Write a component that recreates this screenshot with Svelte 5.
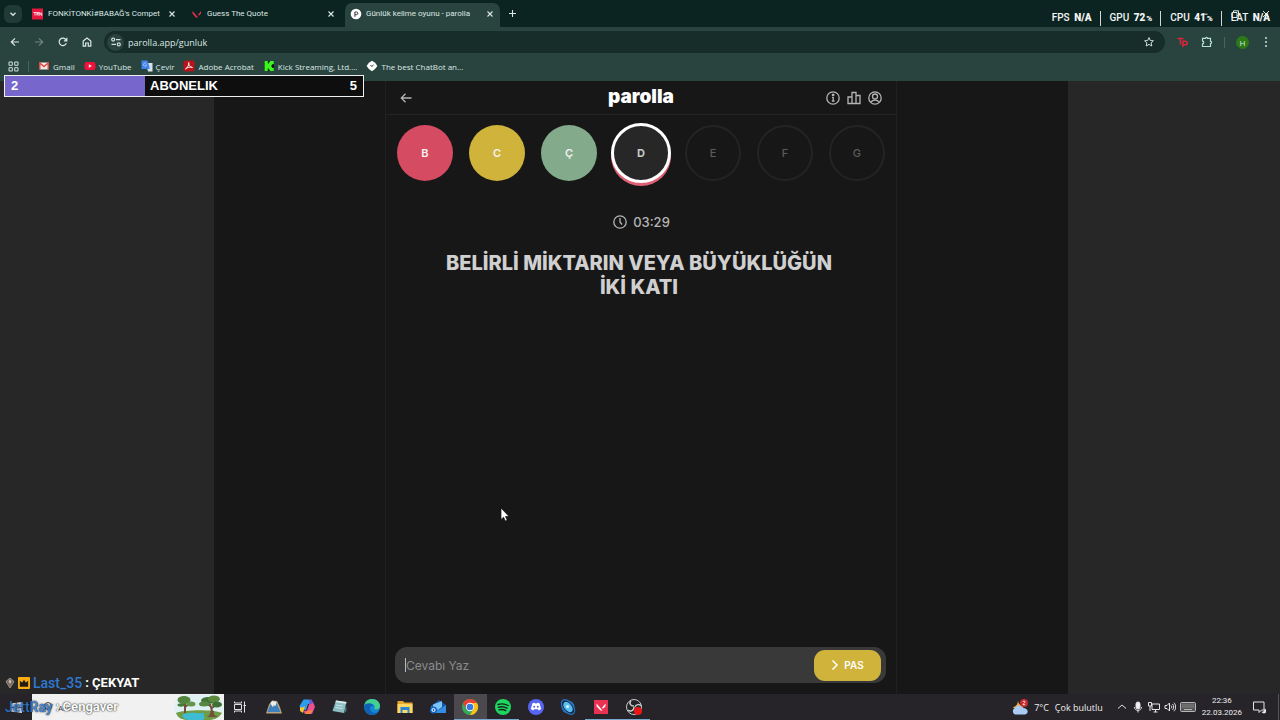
<!-- App.svelte -->

<script>
  let answer = '';
  let current = 3;

  const tabs = [
    { title: 'FONKİTONKİ#BABAĞ\'s Compet', icon: 'trn' },
    { title: 'Guess The Quote', icon: 'valorant' },
    { title: 'Günlük kelime oyunu - parolla', icon: 'parolla', active: true }
  ];

  const bookmarks = [
    { label: 'Gmail', icon: 'gmail' },
    { label: 'YouTube', icon: 'youtube' },
    { label: 'Çevir', icon: 'translate' },
    { label: 'Adobe Acrobat', icon: 'acrobat' },
    { label: 'Kick Streaming, Ltd....', icon: 'kick' },
    { label: 'The best ChatBot an...', icon: 'chatbot' }
  ];

  const letters = [
    { char: 'B', state: 'wrong' },
    { char: 'C', state: 'passed' },
    { char: 'Ç', state: 'correct' },
    { char: 'D', state: 'idle' },
    { char: 'E', state: 'idle' },
    { char: 'F', state: 'idle' },
    { char: 'G', state: 'idle' }
  ];

  const stats = [
    { name: 'FPS', value: 'N/A', unit: '' },
    { name: 'GPU', value: '72', unit: '%' },
    { name: 'CPU', value: '41', unit: '%' },
    { name: 'LAT', value: 'N/A', unit: '' }
  ];

  const apps = [
    { name: 'Photos' },
    { name: 'Copilot' },
    { name: 'Notepad' },
    { name: 'Edge' },
    { name: 'Explorer' },
    { name: 'Mail' },
    { name: 'Chrome', running: true, focused: true },
    { name: 'Spotify', running: true },
    { name: 'Discord' },
    { name: 'Planet' },
    { name: 'Valorant', running: true },
    { name: 'OBS', running: true }
  ];

  function pass() {
    answer = '';
    current = (current + 1) % letters.length;
  }
</script>

<div class="screen">
  <header class="browser">
    <div class="tab-strip">
      <button class="tab-search" aria-label="Search tabs">
        <svg width="10" height="10" viewBox="0 0 10 10"><path d="M2.5 3.8 5 6.3l2.5-2.5" fill="none" stroke="#dce8e4" stroke-width="1.3" /></svg>
      </button>
      <div class="tabs">
        {#each tabs as tab (tab.title)}
          <div class="tab" class:active={tab.active}>
            {#if tab.icon === 'trn'}
              <svg width="12" height="12" viewBox="0 0 12 12">
                <rect y="0.5" width="11" height="11" fill="#e5173f" />
                <path d="M1.5 4.5h3M3 4.5v3M5 7.5v-3h1.5v1.2H5.2L6.6 7.5M7.7 7.5v-3l2 3v-3" fill="none" stroke="#fff" stroke-width="0.8" />
              </svg>
            {:else if tab.icon === 'valorant'}
              <svg width="12" height="12" viewBox="0 0 12 12"><path d="M1.5 3v2.4L4.8 9.5h2.3zM10 3v2.4L8.600 7.200H6.800z" fill="#e8304c" /></svg>
            {:else}
              <svg width="12" height="12" viewBox="0 0 12 12">
                <circle cx="6" cy="6" r="5.300" fill="#fff" />
                <path d="M4.900 8.800V4h1.600a1.300 1.300 0 0 1 0 2.700H5" fill="none" stroke="#333" stroke-width="1" />
              </svg>
            {/if}
            <span class="tab-title">{tab.title}</span>
            <button class="close" aria-label="Close tab">
              <svg width="8" height="8" viewBox="0 0 8 8"><path d="m1.5 1.5 5 5m0-5-5 5" stroke="#dce8e4" stroke-width="1.1" /></svg>
            </button>
          </div>
        {/each}
      </div>
      <button class="new-tab" aria-label="New tab">
        <svg width="9" height="9" viewBox="0 0 9 9"><path d="M4.5 1v7M1 4.5h7" stroke="#dce8e4" stroke-width="1.1" /></svg>
      </button>
      <div class="window-controls">
        <button aria-label="Minimize"><svg width="10" height="10" viewBox="0 0 10 10"><path d="M2 5.2h6.5" stroke="#dce8e4" /></svg></button>
        <button aria-label="Restore"><svg width="10" height="10" viewBox="0 0 10 10"><path d="M2 3.5h5V8.5H2zM3.5 3.5V1.8h5v5H7" fill="none" stroke="#dce8e4" /></svg></button>
        <button aria-label="Close"><svg width="10" height="10" viewBox="0 0 10 10"><path d="m2 2 6 6m0-6L2 8" stroke="#dce8e4" /></svg></button>
      </div>
    </div>

    <div class="toolbar">
      <div class="nav">
        <button aria-label="Back"><svg width="12" height="12" viewBox="0 0 12 12"><path d="M10 6H2.5M6 2.3 2.300 6 6 9.700" /></svg></button>
        <button class="dim" aria-label="Forward"><svg width="12" height="12" viewBox="0 0 12 12"><path d="M2 6h7.5M6 2.300 9.700 6 6 9.700" /></svg></button>
        <button aria-label="Reload"><svg width="12" height="12" viewBox="0 0 12 12"><path d="M9.300 7.200A3.700 3.700 0 1 1 8.900 3.700L9.700 4.600M9.800 1.800v3H6.900" /></svg></button>
        <button aria-label="Home"><svg width="12" height="12" viewBox="0 0 12 12"><path d="M2.200 5 6 2l3.800 3v5.200H7.300V7H4.700v3.200H2.200z" /></svg></button>
      </div>
      <div class="omnibox">
        <span class="site-info">
          <svg width="12" height="12" viewBox="0 0 12 12" fill="none" stroke="#cfe0da" stroke-width="1.2"><circle cx="3.2" cy="3.6" r="1.5" /><path d="M6 3.6h4.5M1.5 8.400H6" /><circle cx="8.800" cy="8.400" r="1.500" /></svg>
        </span>
        <input type="text" value="parolla.app/gunluk" aria-label="Address" />
        <button aria-label="Bookmark this page">
          <svg width="12" height="12" viewBox="0 0 12 12"><path d="m6 1.600 1.300 2.900 3.100.3-2.300 2.100.7 3.100L6 8.400 3.200 10l.7-3.100L1.600 4.800l3.100-.3z" fill="none" stroke="#cfe0da" stroke-linejoin="round" /></svg>
        </button>
      </div>
      <div class="extensions">
        <button aria-label="Tp extension"><svg width="14" height="12" viewBox="0 0 14 12"><path d="M1.500 2.500h6M4.500 2.500v6M7 11V5.200h2.500a1.700 1.700 0 0 1 0 3.500H7.300" fill="none" stroke="#d9263e" stroke-width="1.600" /></svg></button>
        <button aria-label="Extensions"><svg width="12" height="12" viewBox="0 0 12 12"><path d="M1.500 2.300h3a1 1 0 0 1 2 0h3v3a1 1 0 0 1 0 2.200v3h-8v-2.700a1.300 1.300 0 0 0 0-2.600z" fill="none" stroke="#b5e1d1" stroke-width="1.200" /></svg></button>
        <span class="divider"></span>
        <button class="avatar" aria-label="Profile">H</button>
        <button class="menu" aria-label="Menu"><svg width="4" height="12" viewBox="0 0 4 12" fill="#cfe0da"><circle cx="2" cy="2" r="1" /><circle cx="2" cy="6" r="1" /><circle cx="2" cy="10" r="1" /></svg></button>
      </div>
    </div>

    <nav class="bookmarks">
      <svg class="grid-icon" width="11" height="11" viewBox="0 0 11 11" fill="none" stroke="#cfe0da"><path d="M1 1h3.300v3.300H1zM6.700 1H10v3.300H6.700zM1 6.700h3.300V10H1zM6.700 6.700H10V10H6.700z" /></svg>
      <span class="divider"></span>
      {#each bookmarks as mark (mark.label)}
        <a href="#{mark.icon}">
          <svg width="12" height="12" viewBox="0 0 12 12">
            {#if mark.icon === 'gmail'}
              <path d="M1.500 2.500h9v7h-9z" fill="#f4e9e8" /><path d="M1.800 9.500V3L6 6.500 10.200 3v6.500" fill="none" stroke="#e2463c" stroke-width="1.400" />
            {:else if mark.icon === 'youtube'}
              <rect x="0.500" y="2" width="11" height="8" rx="2.300" fill="#f0123a" /><path d="M4.800 4.200v3.600L7.900 6z" fill="#fff" />
            {:else if mark.icon === 'translate'}
              <path d="M5 3h6.500v8.500H7z" fill="#dbe3ea" /><path d="M.5.5h6L9 9H.5z" fill="#4284ec" /><path d="M5.300 3.600A1.600 1.600 0 1 0 5.600 5H4.200M8.500 5.500h2M9.500 5v2l-1 1.500" fill="none" stroke="#b9d6ff" stroke-width=".7" />
            {:else if mark.icon === 'acrobat'}
              <rect x="0.500" y="0.500" width="11" height="11" rx="2" fill="#b9141b" /><path d="M2.500 9c2-1 4-5 3.300-6.500C5 3 6 7 9.500 7.500 7.500 6.500 4 7.500 2.500 9z" fill="none" stroke="#fff" stroke-width=".9" />
            {:else if mark.icon === 'kick'}
              <rect x="1" y="1" width="10" height="10" fill="#0b130b" /><path d="M1.500 1h3.300v2.500h1V2.300h1V1h4v3.300H9v1.200H8v1h1v1.200h1.800V11h-4V9.700h-1V8.500h-1V11H1.500z" fill="#3df522" />
            {:else}
              <path d="m6 .8 3.100 2L11.400 6 9 9.100 6 11.300 2.900 9.100.6 6 2.900 2.800z" fill="#fff" /><path d="m4.500 5 1.200 1.500L7.500 5" fill="none" stroke="#29433e" />
            {/if}
          </svg>
          {mark.label}
        </a>
      {/each}
    </nav>
  </header>

  <main class="page">
    <div class="backdrop">
      <section class="game">
        <div class="game-header">
          <button class="back" aria-label="Geri">
            <svg width="14" height="14" viewBox="0 0 14 14"><path d="M12.500 7h-10M6.500 2.800 2.300 7l4.200 4.200" /></svg>
          </button>
          <h1>parolla</h1>
          <div class="game-actions">
            <button aria-label="Bilgi"><svg width="16" height="16" viewBox="0 0 16 16"><circle cx="8" cy="8" r="6.200" /><path d="M7 7.300h1.200v3.500M6.900 11h2.600M7.500 4.500h1.200v.8H7.500z" /></svg></button>
            <button aria-label="İstatistik"><svg width="16" height="16" viewBox="0 0 16 16"><path d="M2 7h4v6.500H2zM6 2.500h4v11H6zM10 5.500h4v8h-4z" /></svg></button>
            <button aria-label="Profil"><svg width="16" height="16" viewBox="0 0 16 16"><circle cx="8" cy="8" r="6.200" /><circle cx="8" cy="6.500" r="2.500" /><path d="M3.900 12.200c1.800-2.700 6.400-2.700 8.200 0" /></svg></button>
          </div>
        </div>

        <ul class="letters">
          {#each letters as letter, i (letter.char)}
            <li class="letter {letter.state}" class:current={i === current}>{letter.char}</li>
          {/each}
        </ul>

        <div class="timer">
          <svg width="16" height="16" viewBox="0 0 16 16"><circle cx="8" cy="8" r="6.200" fill="none" stroke="#b4b4b4" stroke-width="1.300" /><path d="M8 4v4l2 2.500" fill="none" stroke="#b4b4b4" stroke-width="1.300" /></svg>
          <span>03:29</span>
        </div>

        <p class="question">BELİRLİ MİKTARIN VEYA BÜYÜKLÜĞÜN İKİ KATI</p>

        <form class="answer" on:submit|preventDefault={pass}>
          <input type="text" placeholder="Cevabı Yaz" aria-label="Cevabı Yaz" bind:value={answer} />
          <span class="caret"></span>
          <button type="submit">
            <svg width="8" height="12" viewBox="0 0 8 12"><path d="m1.500 1.500 4.500 4.500-4.500 4.500" fill="none" stroke="#fff" stroke-width="1.500" /></svg>
            PAS
          </button>
        </form>
      </section>
    </div>
  </main>

  <footer class="taskbar">
    <button class="start" aria-label="Start">
      <svg width="11" height="11" viewBox="0 0 11 11" fill="#e8eef5"><path d="M0 1.500 4.800.8v4.400H0zM5.500.7 11 0v5.200H5.500zM0 5.900h4.800v4.400L0 9.600zM5.500 5.900H11V11l-5.500-.7z" /></svg>
    </button>
    <label class="search">
      <svg width="12" height="12" viewBox="0 0 12 12"><circle cx="7" cy="5" r="3.500" fill="none" stroke="#444" /><path d="M4.500 7.500 1.500 10.500" stroke="#444" /></svg>
      <input type="text" placeholder="Ara" aria-label="Ara" />
      <svg class="trees" width="50" height="26" viewBox="0 0 50 26">
        <rect y="1" width="49" height="25" rx="12" fill="#dff1f2" />
        <path d="M2 19c8-3 35-4 46 0-4 6-9 7-14 7H14C8 26 4 24 2 19z" fill="#6f9c45" />
        <path d="M8 21c9-4 17-1 23-2-3 3 2 4-2 7H14c-3-1-5-2-6-5z" fill="#3dbcd2" />
        <path d="M11 19V9M11 13l4-3M38 22c1-5-1-8-2-12M38 14l5-4M36 12l-5-4" stroke="#73503b" stroke-width="2" fill="none" />
        <path d="M33 23c3-1 3-4 4-7l3 1c-1 3 1 5 4 6z" fill="#73503b" />
        <ellipse cx="10" cy="6" rx="6.500" ry="4" fill="#52853e" /><ellipse cx="17" cy="10" rx="4.500" ry="2.500" fill="#64964a" />
        <ellipse cx="7" cy="11" rx="3.500" ry="1.700" fill="#477a38" />
        <ellipse cx="34" cy="6.500" rx="7" ry="3.500" fill="#437437" /><ellipse cx="40" cy="5" rx="6" ry="3.500" fill="#5c8a3f" />
        <ellipse cx="30" cy="10" rx="5" ry="2.500" fill="#568743" /><ellipse cx="43" cy="10.500" rx="5" ry="3" fill="#3f6f36" />
      </svg>
    </label>
    <button class="task-view" aria-label="Task view">
      <svg width="14" height="14" viewBox="0 0 14 14" fill="none" stroke="#e1e1e3"><path d="M1.500 4.500h7v5h-7zM1.500 1.500v1.500h7V1.500M1.500 12.500V11h7v1.500M11.500 1.500v11M10.500 5.500h2.500" /></svg>
    </button>

    <div class="apps">
      {#each apps as app (app.name)}
        <button class="app" class:running={app.running} class:focused={app.focused} aria-label={app.name}>
          <svg width="18" height="18" viewBox="0 0 18 18">
            {#if app.name === 'Photos'}
              <path d="M1 15.500 4 6.500l3-4 5 .5 2.500 5 2.500 7.500z" fill="#b8a47e" /><path d="m2.500 14 3-8 3 3 3-4 4 9z" fill="#3e80bd" /><path d="m5.500 5 2 4 1-2 2 1 1-4-4-1z" fill="#e8f2f2" />
            {:else if app.name === 'Copilot'}
              <path d="M5.500 1.500H11l2 4-3 .5-2 6H3L1.500 8z" fill="#2f9bed" /><path d="M2 9c2 1 4 0 5-1l-2 7-3-2z" fill="#f3c82e" /><path d="M13 5h2.500l1.500 4-3 7H7l-2-3 4-.5 2-6z" fill="#ed5090" /><path d="m11 1.500 2 4.500 2.500-1-2-3.500z" fill="#7a52d9" /><path d="m9 13-2 3h5l3-4z" fill="#f58a3c" />
            {:else if app.name === 'Notepad'}
              <path d="M5 2.500 15.500 4 13 15 1.500 13z" fill="#8bbdc3" /><path d="M5 2.500 15.500 4l-.5 1.800L4.500 4.300z" fill="#dce8e8" /><path d="m13 15 2.500-2-.5-7z" fill="#4b777f" /><path d="m5 7 7 1M4.500 9.500l7 1" stroke="#c7e4e6" />
            {:else if app.name === 'Edge'}
              <circle cx="9" cy="9" r="8" fill="#1686d3" /><path d="M1.200 8C2 3 5 1 9 1c5 0 8 3.500 8 7 0 3-3 4-6 3 2-3 0-5-3-5-3 0-5 0-6.800 2z" fill="#43cf91" /><path d="M1.200 7.500C3 5 9 4 10 7.500 7 8 6 10 7.500 12.500c2 3 5 3 8 1C12 19 1 18 1.200 7.500z" fill="#0e61b4" />
            {:else if app.name === 'Explorer'}
              <path d="M1.500 3h5.500l1.500 1.500h8V15h-15z" fill="#e5a92d" /><path d="M1.500 6h15v9h-15z" fill="#ffd863" /><path d="M4.500 9h9v6h-2v-3h-5v3h-2z" fill="#2c86d4" />
            {:else if app.name === 'Mail'}
              <path d="M2 8 10 2l7 5v8H2z" fill="#1259ad" /><path d="M4 6.500 13 3v6l-4 3-5-2z" fill="#7cc3f2" /><path d="m2 8 8 4 7-5v8H2z" fill="#348de5" /><circle cx="4.500" cy="12" r="3.500" fill="#1766c3" /><circle cx="4.500" cy="12" r="1.500" fill="none" stroke="#fff" />
            {:else if app.name === 'Chrome'}
              <circle cx="9" cy="9" r="8" fill="#3aa757" /><path d="M2.100 5A8 8 0 0 1 16 5H9a4 4 0 0 0-3.500 6z" fill="#e54235" /><path d="M9 5h7a8 8 0 0 1-7 12l3.500-6A4 4 0 0 0 9 5z" fill="#fbc116" /><circle cx="9" cy="9" r="4.200" fill="#fff" /><circle cx="9" cy="9" r="3.300" fill="#3878e2" />
            {:else if app.name === 'Spotify'}
              <circle cx="9" cy="9" r="8" fill="#1ed760" /><path d="M4 6.500c3.500-1 7-.7 10.200 1M4.500 9.200c3-.8 5.800-.5 8.500 1M5 11.800c2.500-.7 4.700-.4 6.800.8" fill="none" stroke="#15251b" stroke-width="1.400" stroke-linecap="round" />
            {:else if app.name === 'Discord'}
              <circle cx="9" cy="9" r="8" fill="#5865f2" /><path d="M5.500 5.300 8 4.700l.3.7h1.400l.3-.7 2.500.6 1.700 5.700-2.400 1.500-1-1.200H7.200l-1 1.200L3.800 11z" fill="#fff" /><circle cx="7.200" cy="8.800" r="1" fill="#5865f2" /><circle cx="10.800" cy="8.800" r="1" fill="#5865f2" />
            {:else if app.name === 'Planet'}
              <circle cx="9" cy="9" r="6.500" fill="#2c78cb" /><ellipse cx="9" cy="9" rx="8.500" ry="5" transform="rotate(50 9 9)" fill="#142943" stroke="#2873bd" stroke-width="1.200" /><ellipse cx="9" cy="9" rx="6" ry="3.600" transform="rotate(50 9 9)" fill="#57bdf2" /><circle cx="8.500" cy="8.500" r="1.500" fill="#e1f7ff" />
            {:else if app.name === 'Valorant'}
              <rect x="2" y="2" width="14" height="14" fill="#e93151" /><path d="M4.500 5.500v2.700l4 4.300h2zM13.500 5.500v2.700l-1.800 2h-2z" fill="#fff" />
            {:else}
              <circle cx="9" cy="9" r="7.500" fill="#242326" stroke="#c8c8c8" /><path d="M9 8c-4 0-5-3-3-5M9 9c0 4-4 5-6 3M10 9c1-3 5-3 6-1" fill="none" stroke="#c8c8c8" stroke-width="1.500" /><circle cx="13" cy="13" r="4" fill="#eb1717" />
            {/if}
          </svg>
        </button>
      {/each}
    </div>

    <div class="tray">
      <svg class="weather" width="18" height="18" viewBox="0 0 18 18"><path d="M7 2c0 4 3 6 6 6-1 4-9 5-11 1 3 0 5-3 5-7z" fill="#efad3b" /><path d="M4 16.500a3.500 3.500 0 0 1 0-6.500C5 6.500 11 6.500 12 10c6 0 6 6.500 1.500 6.500z" fill="#a9cbf4" /><circle cx="13" cy="5" r="4" fill="#c92a2e" /><path d="M12 4c0-1.300 2-1.300 2 0 0 1-2 1.500-2 2.700h2.200" fill="none" stroke="#fff" stroke-width=".8" /></svg>
      <span class="forecast"><span>7°C</span><span>Çok bulutlu</span></span>
      <div class="tray-icons">
        <svg width="12" height="12" viewBox="0 0 12 12"><path d="M2 7.500 6 4l4 3.500" /></svg>
        <svg width="12" height="12" viewBox="0 0 12 12"><rect x="4" y="1" width="4" height="7" rx="2" fill="#f2f2f2" /><path d="M2.500 6c0 4.500 7 4.500 7 0M6 9.500v2" /></svg>
        <svg width="12" height="12" viewBox="0 0 12 12"><path d="M4 3h7.500v5.500H4zM7.500 8.500V11M5.500 11h4M.5 1.500h3V5h-3zM2 5v5" /></svg>
        <svg width="12" height="12" viewBox="0 0 12 12"><path d="M1 4.500h2L5.500 2v8L3 7.500H1zM7 4.500c1 1 1 2 0 3M8.500 3c1.600 1.600 1.600 4.400 0 6M10 1.700c2.200 2.500 2.200 6.100 0 8.600" /></svg>
        <svg width="16" height="12" viewBox="0 0 16 12"><rect x=".5" y="1.500" width="15" height="9" rx="1" fill="#555" stroke="#b8b8bc" /><path d="M2.500 4h11M2.500 6h11" stroke="#b8b8bc" stroke-dasharray="1 1" /><path d="M4 8.500h8" stroke="#b8b8bc" /></svg>
      </div>
      <div class="clock"><span>22:36</span><span>22.03.2026</span></div>
      <svg class="notice" width="14" height="14" viewBox="0 0 14 14"><path d="M1.500 2h10.500v8H9.500L7 12.500V10H1.500z" fill="none" stroke="#e4e4e6" /><path d="M12.500 8.500a2.500 2.500 0 1 1-3 3.200c1.500.5 3-.7 3-3.200z" fill="#e4e4e6" /></svg>
      <span class="desktop-edge"></span>
    </div>
  </footer>

  <!-- stream overlays -->
  <div class="stats">
    {#each stats as stat (stat.name)}
      <span class="stat">{stat.name} <b>{stat.value}{#if stat.unit}<small>{stat.unit}</small>{/if}</b></span>
    {/each}
  </div>

  <div class="goal">
    <div class="goal-fill" style="width: {(2 / 5) * 98}%"></div>
    <span>2</span>
    <span>ABONELIK</span>
    <span>5</span>
  </div>

  <div class="chat">
    <p>
      <svg width="10" height="12" viewBox="0 0 10 12"><path d="m5 1 4 3.500L5 11 1 4.500z" fill="#77665d" stroke="#9e9188" /><path d="m5 2.500 1.500 2L5 7 3.500 4.500z" fill="#d1c5b8" /></svg>
      <svg width="12" height="12" viewBox="0 0 13 13"><rect width="13" height="13" rx="1" fill="#f9ad13" /><path d="m2 4 2.500 2L6.500 3l2 3L11 4v6.500H2z" fill="#241d12" /></svg>
      <b class="user">Last_35</b><b>: ÇEKYAT</b>
    </p>
    <p class="fading"><b class="user">JettRay</b><b>: Cengaver</b></p>
  </div>

  <svg class="cursor" width="10" height="15" viewBox="0 0 10 15"><path d="M1 1v11.500l2.600-2.300 1.700 3.900 1.900-.8-1.700-3.800H9z" fill="#fff" stroke="#111" stroke-width=".7" /></svg>
</div>

<style>
  :global(body) {
    margin: 0;
    background: #171717;
  }

  .screen {
    position: relative;
    display: flex;
    flex-direction: column;
    min-height: 100vh;
    overflow: hidden;
    font-family: 'Open Sans', 'Noto Sans', sans-serif;
    font-size: 8px;
    color: #dce8e4;
  }

  button {
    display: flex;
    align-items: center;
    justify-content: center;
    padding: 0;
    border: 0;
    background: none;
    color: inherit;
    font: inherit;
    cursor: pointer;
  }

  input {
    min-width: 0;
    padding: 0;
    border: 0;
    outline: 0;
    background: none;
    color: inherit;
    font: inherit;
  }

  svg {
    display: block;
    flex: none;
  }

  .divider {
    width: 1px;
    height: 11px;
    background: #48645e;
  }

  /* browser chrome */
  .browser {
    background: #29433e;
  }

  .tab-strip {
    display: flex;
    align-items: center;
    height: 27px;
    padding-left: 4px;
    background: #0b2421;
  }

  .tab-search {
    width: 18px;
    height: 18px;
    border-radius: 6px;
    background: #203a36;
  }

  .tabs {
    display: flex;
    align-self: stretch;
    gap: 4px;
    margin-left: 5px;
    font-family: Roboto, sans-serif;
  }

  .tab {
    display: flex;
    align-items: center;
    gap: 4px;
    width: 144px;
    margin-top: 3px;
    padding: 0 6px 3px 5px;
    border-radius: 7px 7px 0 0;
  }

  .tab.active {
    background: #29433e;
  }

  .tab-title {
    flex: 1;
    min-width: 0;
    white-space: nowrap;
  }

  .close {
    width: 8px;
    height: 8px;
    margin-left: 4px;
  }

  .new-tab {
    margin-left: 8px;
  }

  .window-controls {
    display: flex;
    gap: 21px;
    margin-left: auto;
    padding-right: 9px;
  }

  .toolbar {
    display: flex;
    align-items: center;
    gap: 11px;
    height: 30px;
    padding: 0 12px 0 9px;
  }

  .nav {
    display: flex;
    gap: 12px;
  }

  .nav svg {
    fill: none;
    stroke: #dce8e4;
    stroke-width: 1.2;
  }

  .nav .dim {
    opacity: 0.4;
  }

  .omnibox {
    flex: 1;
    display: flex;
    align-items: center;
    gap: 4px;
    height: 22px;
    padding: 0 10px 0 3px;
    border-radius: 11px;
    background: #162d2a;
    font-size: 9px;
  }

  .omnibox input {
    flex: 1;
  }

  .site-info {
    display: grid;
    place-items: center;
    width: 17px;
    height: 17px;
    border-radius: 50%;
    background: #29433e;
  }

  .extensions {
    display: flex;
    align-items: center;
    gap: 11px;
  }

  .avatar {
    width: 13px;
    height: 13px;
    border-radius: 50%;
    background: #2c7a17;
  }

  .menu {
    margin-left: 4px;
  }

  .bookmarks {
    display: flex;
    align-items: center;
    gap: 9px;
    height: 24px;
    padding: 0 8px 6px;
    box-sizing: border-box;
  }

  .bookmarks a {
    display: flex;
    align-items: center;
    gap: 3px;
    color: inherit;
    text-decoration: none;
    white-space: nowrap;
  }

  /* game page */
  .page {
    flex: 1;
    display: flex;
    justify-content: center;
    padding-left: 2px;
    background: #272727;
  }

  .backdrop {
    display: flex;
    justify-content: center;
    width: 66.8%;
    background: #171717;
  }

  .game {
    flex: 1;
    display: flex;
    flex-direction: column;
    max-width: 510px;
    border: solid #202020;
    border-width: 0 1px;
    font-family: Inter, Roboto, sans-serif;
  }

  .game-header {
    display: grid;
    grid-template-columns: 1fr auto 1fr;
    align-items: center;
    height: 33px;
    padding: 0 13px;
    border-bottom: 1px solid #232323;
  }

  .back {
    justify-self: start;
  }

  .game-header svg {
    fill: none;
    stroke: #b4b4b4;
    stroke-width: 1.3;
  }

  h1 {
    margin: 0;
    padding-bottom: 2px;
    color: #fff;
    font-size: 19px;
    font-weight: 900;
    line-height: 20px;
  }

  .game-actions {
    display: flex;
    justify-self: end;
    gap: 5px;
  }

  .letters {
    display: flex;
    align-items: center;
    justify-content: center;
    gap: 16px;
    height: 60px;
    margin: 8px 0 0;
    padding: 0;
    list-style: none;
  }

  .letter {
    display: grid;
    place-items: center;
    box-sizing: border-box;
    width: 56px;
    height: 56px;
    border-radius: 50%;
    color: #f2f2f2;
    font-size: 11px;
    font-weight: 600;
  }

  .letter.wrong {
    background: #d54b61;
  }

  .letter.passed {
    background: #cfb33b;
  }

  .letter.correct {
    background: #83aa8a;
  }

  .letter.idle {
    border: 2px solid #242424;
    color: #5c5c5c;
    font-weight: 500;
  }

  .letter.current {
    width: 60px;
    height: 60px;
    margin: 0 -2px;
    border: 3px solid #fff;
    background: #272727;
    box-shadow: 0 3px 0 #de6074;
    color: #c8c8c8;
    font-weight: 700;
  }

  .timer {
    display: flex;
    align-items: center;
    justify-content: center;
    gap: 5px;
    margin-top: 29px;
    color: #b4b4b4;
    font-size: 13px;
    font-weight: 500;
    line-height: 20px;
  }

  .question {
    margin: 19px 52px 0 48px;
    color: #d0d0d0;
    font-size: 20px;
    font-weight: 800;
    line-height: 24px;
    text-align: center;
  }

  .answer {
    position: relative;
    display: flex;
    align-items: center;
    height: 36px;
    margin: auto 10px 11px 9px;
    padding: 0 5px 0 11px;
    border-radius: 12px;
    background: #393939;
    font-size: 12px;
  }

  .answer input {
    flex: 1;
    color: #ddd;
  }

  .answer input::placeholder {
    color: #8b8b8b;
    opacity: 1;
  }

  .caret {
    position: absolute;
    left: 10px;
    width: 1px;
    height: 14px;
    background: #bbb;
  }

  .answer button {
    gap: 5px;
    width: 67px;
    height: 31px;
    border-radius: 11px;
    background: #cfb33b;
    color: #fff;
    font-size: 10px;
    font-weight: 600;
  }

  /* taskbar */
  .taskbar {
    display: flex;
    align-items: stretch;
    height: 26px;
    background: #262429;
    color: #eee;
  }

  .start {
    width: 32px;
  }

  .search {
    display: flex;
    align-items: center;
    gap: 5px;
    width: 183px;
    padding: 0 0 0 9px;
    background: #f1f1f1;
    color: #444;
  }

  .search input {
    flex: 1;
  }

  .search input::placeholder {
    color: #444;
    opacity: 1;
  }

  .task-view {
    width: 32px;
  }

  .apps {
    display: grid;
    grid-template-columns: repeat(12, 1fr);
    width: 392px;
    margin-left: 2px;
  }

  .app {
    border-bottom: 1px solid transparent;
  }

  .app.running {
    border-color: #76a9d0;
  }

  .app.focused {
    background: #4b494d;
  }

  .tray {
    display: flex;
    align-items: center;
    margin-left: auto;
  }

  .forecast {
    display: flex;
    gap: 6px;
    margin: 0 13px 0 5px;
    font-size: 9px;
  }

  .tray-icons {
    display: flex;
    align-items: center;
    gap: 4px;
  }

  .tray-icons svg {
    fill: none;
    stroke: #e4e4e6;
  }

  .clock {
    display: flex;
    flex-direction: column;
    align-items: center;
    margin: 0 10px 0 6px;
    font-family: Roboto, sans-serif;
    line-height: 12px;
  }

  .desktop-edge {
    width: 1px;
    height: 26px;
    margin: 0 1px 0 12px;
    background: #55535a;
  }

  /* overlays */
  .stats {
    position: absolute;
    top: 11px;
    right: 10px;
    display: flex;
    color: #f4f4f4;
    font-family: Roboto, sans-serif;
    font-size: 10px;
    font-weight: 500;
    line-height: 14px;
  }

  .stat + .stat {
    margin-left: 8px;
    padding-left: 9px;
    border-left: 1px solid #d0d8d6;
  }

  .stat b {
    margin-left: 2px;
    font-weight: 900;
  }

  .stat small {
    margin-left: 1px;
    font-size: 8px;
  }

  .goal {
    position: absolute;
    top: 75px;
    left: 4px;
    display: grid;
    grid-template-columns: 1fr auto 1fr;
    align-items: center;
    box-sizing: border-box;
    width: 360px;
    height: 22px;
    padding: 0 6px;
    border: 1px solid #f0f0f0;
    background: #0e0e0f;
    color: #fff;
    font: 700 13px/20px 'Liberation Sans', sans-serif;
  }

  .goal-fill {
    position: absolute;
    top: 0;
    bottom: 0;
    left: 0;
    background: #7766cc;
  }

  .goal span {
    position: relative;
  }

  .goal span:last-child {
    text-align: right;
  }

  .chat {
    position: absolute;
    bottom: 1px;
    left: 5px;
    color: #fff;
    font: 13px/24px Roboto, sans-serif;
  }

  .chat p {
    display: flex;
    align-items: center;
    gap: 3px;
    margin: 0;
    white-space: nowrap;
  }

  .user {
    color: #2e78d2;
    font-size: 14px;
    font-weight: 500;
  }

  .fading {
    opacity: 0.85;
    text-shadow: 0 0 1px #111, 0 0 2px #222;
  }

  .cursor {
    position: absolute;
    top: 507px;
    left: 500px;
  }
</style>
